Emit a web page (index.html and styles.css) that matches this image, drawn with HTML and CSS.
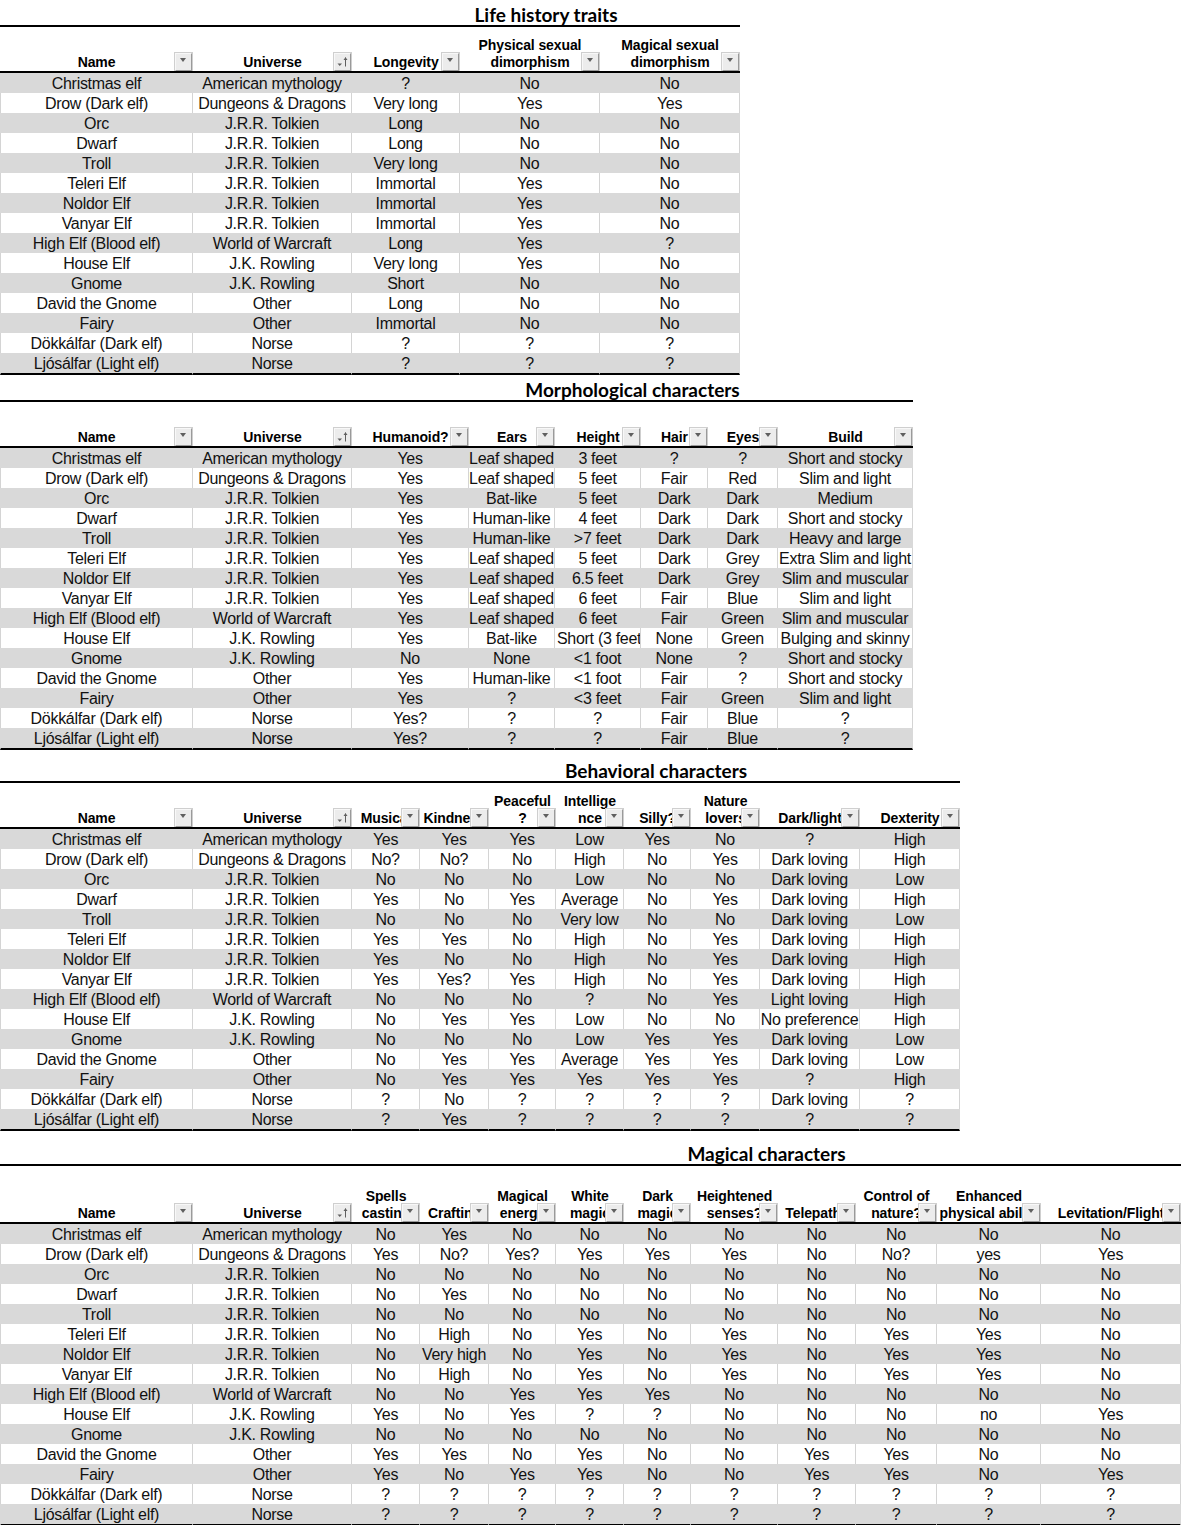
FILE: index.html
```html
<!DOCTYPE html>
<html>
<head>
<meta charset="utf-8">
<link rel="stylesheet" href="styles.css">
</head>
<body>

<section class="sheet s1">
  <div class="title-row"><div class="pad"></div><div class="title">Life history traits</div></div>
  <table class="t1">
    <colgroup><col style="width:193px"><col style="width:159px"><col style="width:108px"><col style="width:140px"><col style="width:140px"></colgroup>
    <thead><tr>
      <th>Name<span class="dd"></span></th>
      <th>Universe<span class="dd sort"><svg viewBox="0 0 15 16" width="15" height="16"><path d="M2.5 9.5h4.5l-2.25 2.5z" fill="#5f5f5f"/><path d="M10.5 3.5v9" stroke="#5f5f5f" stroke-width="1" fill="none"/><path d="M8.5 6l2-2.8 2 2.8z" fill="#5f5f5f"/></svg></span></th>
      <th>Longevity<span class="dd"></span></th>
      <th>Physical sexual<br>dimorphism<span class="dd"></span></th>
      <th>Magical sexual<br>dimorphism<span class="dd"></span></th>
    </tr></thead>
    <tbody>
      <tr class="g"><td>Christmas elf</td><td>American mythology</td><td>?</td><td>No</td><td>No</td></tr>
      <tr><td>Drow (Dark elf)</td><td>Dungeons &amp; Dragons</td><td>Very long</td><td>Yes</td><td>Yes</td></tr>
      <tr class="g"><td>Orc</td><td>J.R.R. Tolkien</td><td>Long</td><td>No</td><td>No</td></tr>
      <tr><td>Dwarf</td><td>J.R.R. Tolkien</td><td>Long</td><td>No</td><td>No</td></tr>
      <tr class="g"><td>Troll</td><td>J.R.R. Tolkien</td><td>Very long</td><td>No</td><td>No</td></tr>
      <tr><td>Teleri Elf</td><td>J.R.R. Tolkien</td><td>Immortal</td><td>Yes</td><td>No</td></tr>
      <tr class="g"><td>Noldor Elf</td><td>J.R.R. Tolkien</td><td>Immortal</td><td>Yes</td><td>No</td></tr>
      <tr><td>Vanyar Elf</td><td>J.R.R. Tolkien</td><td>Immortal</td><td>Yes</td><td>No</td></tr>
      <tr class="g"><td>High Elf (Blood elf)</td><td>World of Warcraft</td><td>Long</td><td>Yes</td><td>?</td></tr>
      <tr><td>House Elf</td><td>J.K. Rowling</td><td>Very long</td><td>Yes</td><td>No</td></tr>
      <tr class="g"><td>Gnome</td><td>J.K. Rowling</td><td>Short</td><td>No</td><td>No</td></tr>
      <tr><td>David the Gnome</td><td>Other</td><td>Long</td><td>No</td><td>No</td></tr>
      <tr class="g"><td>Fairy</td><td>Other</td><td>Immortal</td><td>No</td><td>No</td></tr>
      <tr><td>Dökkálfar (Dark elf)</td><td>Norse</td><td>?</td><td>?</td><td>?</td></tr>
      <tr class="g"><td>Ljósálfar (Light elf)</td><td>Norse</td><td>?</td><td>?</td><td>?</td></tr>
    </tbody>
  </table>
</section>

<section class="sheet s2">
  <div class="title-row"><div class="pad"></div><div class="title">Morphological characters</div></div>
  <table class="t2">
    <colgroup><col style="width:193px"><col style="width:159px"><col style="width:117px"><col style="width:86px"><col style="width:86px"><col style="width:67px"><col style="width:70px"><col style="width:135px"></colgroup>
    <thead><tr>
      <th>Name<span class="dd"></span></th>
      <th>Universe<span class="dd sort"><svg viewBox="0 0 15 16" width="15" height="16"><path d="M2.5 9.5h4.5l-2.25 2.5z" fill="#5f5f5f"/><path d="M10.5 3.5v9" stroke="#5f5f5f" stroke-width="1" fill="none"/><path d="M8.5 6l2-2.8 2 2.8z" fill="#5f5f5f"/></svg></span></th>
      <th>Humanoid?<span class="dd"></span></th>
      <th>Ears<span class="dd"></span></th>
      <th>Height<span class="dd"></span></th>
      <th>Hair<span class="dd"></span></th>
      <th>Eyes<span class="dd"></span></th>
      <th>Build<span class="dd"></span></th>
    </tr></thead>
    <tbody>
      <tr class="g"><td>Christmas elf</td><td>American mythology</td><td>Yes</td><td>Leaf shaped</td><td>3 feet</td><td>?</td><td>?</td><td>Short and stocky</td></tr>
      <tr><td>Drow (Dark elf)</td><td>Dungeons &amp; Dragons</td><td>Yes</td><td>Leaf shaped</td><td>5 feet</td><td>Fair</td><td>Red</td><td>Slim and light</td></tr>
      <tr class="g"><td>Orc</td><td>J.R.R. Tolkien</td><td>Yes</td><td>Bat-like</td><td>5 feet</td><td>Dark</td><td>Dark</td><td>Medium</td></tr>
      <tr><td>Dwarf</td><td>J.R.R. Tolkien</td><td>Yes</td><td>Human-like</td><td>4 feet</td><td>Dark</td><td>Dark</td><td>Short and stocky</td></tr>
      <tr class="g"><td>Troll</td><td>J.R.R. Tolkien</td><td>Yes</td><td>Human-like</td><td>&gt;7 feet</td><td>Dark</td><td>Dark</td><td>Heavy and large</td></tr>
      <tr><td>Teleri Elf</td><td>J.R.R. Tolkien</td><td>Yes</td><td>Leaf shaped</td><td>5 feet</td><td>Dark</td><td>Grey</td><td>Extra Slim and light</td></tr>
      <tr class="g"><td>Noldor Elf</td><td>J.R.R. Tolkien</td><td>Yes</td><td>Leaf shaped</td><td>6.5 feet</td><td>Dark</td><td>Grey</td><td>Slim and muscular</td></tr>
      <tr><td>Vanyar Elf</td><td>J.R.R. Tolkien</td><td>Yes</td><td>Leaf shaped</td><td>6 feet</td><td>Fair</td><td>Blue</td><td>Slim and light</td></tr>
      <tr class="g"><td>High Elf (Blood elf)</td><td>World of Warcraft</td><td>Yes</td><td>Leaf shaped</td><td>6 feet</td><td>Fair</td><td>Green</td><td>Slim and muscular</td></tr>
      <tr><td>House Elf</td><td>J.K. Rowling</td><td>Yes</td><td>Bat-like</td><td class="clip">Short (3 feet)</td><td>None</td><td>Green</td><td>Bulging and skinny</td></tr>
      <tr class="g"><td>Gnome</td><td>J.K. Rowling</td><td>No</td><td>None</td><td>&lt;1 foot</td><td>None</td><td>?</td><td>Short and stocky</td></tr>
      <tr><td>David the Gnome</td><td>Other</td><td>Yes</td><td>Human-like</td><td>&lt;1 foot</td><td>Fair</td><td>?</td><td>Short and stocky</td></tr>
      <tr class="g"><td>Fairy</td><td>Other</td><td>Yes</td><td>?</td><td>&lt;3 feet</td><td>Fair</td><td>Green</td><td>Slim and light</td></tr>
      <tr><td>Dökkálfar (Dark elf)</td><td>Norse</td><td>Yes?</td><td>?</td><td>?</td><td>Fair</td><td>Blue</td><td>?</td></tr>
      <tr class="g"><td>Ljósálfar (Light elf)</td><td>Norse</td><td>Yes?</td><td>?</td><td>?</td><td>Fair</td><td>Blue</td><td>?</td></tr>
    </tbody>
  </table>
</section>

<section class="sheet s3">
  <div class="title-row"><div class="pad"></div><div class="title">Behavioral characters</div></div>
  <table class="t3">
    <colgroup><col style="width:193px"><col style="width:159px"><col style="width:68px"><col style="width:69px"><col style="width:67px"><col style="width:68px"><col style="width:67px"><col style="width:69px"><col style="width:100px"><col style="width:100px"></colgroup>
    <thead><tr>
      <th>Name<span class="dd"></span></th>
      <th>Universe<span class="dd sort"><svg viewBox="0 0 15 16" width="15" height="16"><path d="M2.5 9.5h4.5l-2.25 2.5z" fill="#5f5f5f"/><path d="M10.5 3.5v9" stroke="#5f5f5f" stroke-width="1" fill="none"/><path d="M8.5 6l2-2.8 2 2.8z" fill="#5f5f5f"/></svg></span></th>
      <th>Musical<span class="dd"></span></th>
      <th>Kindness<span class="dd"></span></th>
      <th>Peaceful<br>?<span class="dd"></span></th>
      <th>Intellige<br>nce<span class="dd"></span></th>
      <th>Silly?<span class="dd"></span></th>
      <th>Nature<br>lovers<span class="dd"></span></th>
      <th>Dark/light<span class="dd"></span></th>
      <th>Dexterity<span class="dd"></span></th>
    </tr></thead>
    <tbody>
      <tr class="g"><td>Christmas elf</td><td>American mythology</td><td>Yes</td><td>Yes</td><td>Yes</td><td>Low</td><td>Yes</td><td>No</td><td>?</td><td>High</td></tr>
      <tr><td>Drow (Dark elf)</td><td>Dungeons &amp; Dragons</td><td>No?</td><td>No?</td><td>No</td><td>High</td><td>No</td><td>Yes</td><td>Dark loving</td><td>High</td></tr>
      <tr class="g"><td>Orc</td><td>J.R.R. Tolkien</td><td>No</td><td>No</td><td>No</td><td>Low</td><td>No</td><td>No</td><td>Dark loving</td><td>Low</td></tr>
      <tr><td>Dwarf</td><td>J.R.R. Tolkien</td><td>Yes</td><td>No</td><td>Yes</td><td>Average</td><td>No</td><td>Yes</td><td>Dark loving</td><td>High</td></tr>
      <tr class="g"><td>Troll</td><td>J.R.R. Tolkien</td><td>No</td><td>No</td><td>No</td><td>Very low</td><td>No</td><td>No</td><td>Dark loving</td><td>Low</td></tr>
      <tr><td>Teleri Elf</td><td>J.R.R. Tolkien</td><td>Yes</td><td>Yes</td><td>No</td><td>High</td><td>No</td><td>Yes</td><td>Dark loving</td><td>High</td></tr>
      <tr class="g"><td>Noldor Elf</td><td>J.R.R. Tolkien</td><td>Yes</td><td>No</td><td>No</td><td>High</td><td>No</td><td>Yes</td><td>Dark loving</td><td>High</td></tr>
      <tr><td>Vanyar Elf</td><td>J.R.R. Tolkien</td><td>Yes</td><td>Yes?</td><td>Yes</td><td>High</td><td>No</td><td>Yes</td><td>Dark loving</td><td>High</td></tr>
      <tr class="g"><td>High Elf (Blood elf)</td><td>World of Warcraft</td><td>No</td><td>No</td><td>No</td><td>?</td><td>No</td><td>Yes</td><td>Light loving</td><td>High</td></tr>
      <tr><td>House Elf</td><td>J.K. Rowling</td><td>No</td><td>Yes</td><td>Yes</td><td>Low</td><td>No</td><td>No</td><td>No preference</td><td>High</td></tr>
      <tr class="g"><td>Gnome</td><td>J.K. Rowling</td><td>No</td><td>No</td><td>No</td><td>Low</td><td>Yes</td><td>Yes</td><td>Dark loving</td><td>Low</td></tr>
      <tr><td>David the Gnome</td><td>Other</td><td>No</td><td>Yes</td><td>Yes</td><td>Average</td><td>Yes</td><td>Yes</td><td>Dark loving</td><td>Low</td></tr>
      <tr class="g"><td>Fairy</td><td>Other</td><td>No</td><td>Yes</td><td>Yes</td><td>Yes</td><td>Yes</td><td>Yes</td><td>?</td><td>High</td></tr>
      <tr><td>Dökkálfar (Dark elf)</td><td>Norse</td><td>?</td><td>No</td><td>?</td><td>?</td><td>?</td><td>?</td><td>Dark loving</td><td>?</td></tr>
      <tr class="g"><td>Ljósálfar (Light elf)</td><td>Norse</td><td>?</td><td>Yes</td><td>?</td><td>?</td><td>?</td><td>?</td><td>?</td><td>?</td></tr>
    </tbody>
  </table>
</section>

<section class="sheet s4">
  <div class="title-row"><div class="pad"></div><div class="title">Magical characters</div></div>
  <table class="t4">
    <colgroup><col style="width:193px"><col style="width:159px"><col style="width:68px"><col style="width:69px"><col style="width:67px"><col style="width:68px"><col style="width:67px"><col style="width:87px"><col style="width:78px"><col style="width:81px"><col style="width:104px"><col style="width:140px"></colgroup>
    <thead><tr>
      <th>Name<span class="dd"></span></th>
      <th>Universe<span class="dd sort"><svg viewBox="0 0 15 16" width="15" height="16"><path d="M2.5 9.5h4.5l-2.25 2.5z" fill="#5f5f5f"/><path d="M10.5 3.5v9" stroke="#5f5f5f" stroke-width="1" fill="none"/><path d="M8.5 6l2-2.8 2 2.8z" fill="#5f5f5f"/></svg></span></th>
      <th>Spells<br>casting<span class="dd"></span></th>
      <th>Crafting<span class="dd"></span></th>
      <th>Magical<br>energy<span class="dd"></span></th>
      <th>White<br>magic<span class="dd"></span></th>
      <th>Dark<br>magic<span class="dd"></span></th>
      <th>Heightened<br>senses?<span class="dd"></span></th>
      <th>Telepathy<span class="dd"></span></th>
      <th>Control of<br>nature?<span class="dd"></span></th>
      <th>Enhanced<br>physical ability<span class="dd"></span></th>
      <th>Levitation/Flight<span class="dd"></span></th>
    </tr></thead>
    <tbody>
      <tr class="g"><td>Christmas elf</td><td>American mythology</td><td>No</td><td>Yes</td><td>No</td><td>No</td><td>No</td><td>No</td><td>No</td><td>No</td><td>No</td><td>No</td></tr>
      <tr><td>Drow (Dark elf)</td><td>Dungeons &amp; Dragons</td><td>Yes</td><td>No?</td><td>Yes?</td><td>Yes</td><td>Yes</td><td>Yes</td><td>No</td><td>No?</td><td>yes</td><td>Yes</td></tr>
      <tr class="g"><td>Orc</td><td>J.R.R. Tolkien</td><td>No</td><td>No</td><td>No</td><td>No</td><td>No</td><td>No</td><td>No</td><td>No</td><td>No</td><td>No</td></tr>
      <tr><td>Dwarf</td><td>J.R.R. Tolkien</td><td>No</td><td>Yes</td><td>No</td><td>No</td><td>No</td><td>No</td><td>No</td><td>No</td><td>No</td><td>No</td></tr>
      <tr class="g"><td>Troll</td><td>J.R.R. Tolkien</td><td>No</td><td>No</td><td>No</td><td>No</td><td>No</td><td>No</td><td>No</td><td>No</td><td>No</td><td>No</td></tr>
      <tr><td>Teleri Elf</td><td>J.R.R. Tolkien</td><td>No</td><td>High</td><td>No</td><td>Yes</td><td>No</td><td>Yes</td><td>No</td><td>Yes</td><td>Yes</td><td>No</td></tr>
      <tr class="g"><td>Noldor Elf</td><td>J.R.R. Tolkien</td><td>No</td><td>Very high</td><td>No</td><td>Yes</td><td>No</td><td>Yes</td><td>No</td><td>Yes</td><td>Yes</td><td>No</td></tr>
      <tr><td>Vanyar Elf</td><td>J.R.R. Tolkien</td><td>No</td><td>High</td><td>No</td><td>Yes</td><td>No</td><td>Yes</td><td>No</td><td>Yes</td><td>Yes</td><td>No</td></tr>
      <tr class="g"><td>High Elf (Blood elf)</td><td>World of Warcraft</td><td>No</td><td>No</td><td>Yes</td><td>Yes</td><td>Yes</td><td>No</td><td>No</td><td>No</td><td>No</td><td>No</td></tr>
      <tr><td>House Elf</td><td>J.K. Rowling</td><td>Yes</td><td>No</td><td>Yes</td><td>?</td><td>?</td><td>No</td><td>No</td><td>No</td><td>no</td><td>Yes</td></tr>
      <tr class="g"><td>Gnome</td><td>J.K. Rowling</td><td>No</td><td>No</td><td>No</td><td>No</td><td>No</td><td>No</td><td>No</td><td>No</td><td>No</td><td>No</td></tr>
      <tr><td>David the Gnome</td><td>Other</td><td>Yes</td><td>Yes</td><td>No</td><td>Yes</td><td>No</td><td>No</td><td>Yes</td><td>Yes</td><td>No</td><td>No</td></tr>
      <tr class="g"><td>Fairy</td><td>Other</td><td>Yes</td><td>No</td><td>Yes</td><td>Yes</td><td>No</td><td>No</td><td>Yes</td><td>Yes</td><td>No</td><td>Yes</td></tr>
      <tr><td>Dökkálfar (Dark elf)</td><td>Norse</td><td>?</td><td>?</td><td>?</td><td>?</td><td>?</td><td>?</td><td>?</td><td>?</td><td>?</td><td>?</td></tr>
      <tr class="g"><td>Ljósálfar (Light elf)</td><td>Norse</td><td>?</td><td>?</td><td>?</td><td>?</td><td>?</td><td>?</td><td>?</td><td>?</td><td>?</td><td>?</td></tr>
    </tbody>
  </table>
</section>

</body>
</html>
```

FILE: styles.css
```css
html, body {
  margin: 0;
  padding: 0;
  background: #ffffff;
}

body {
  font-family: "Liberation Sans", Arial, sans-serif;
  color: #111111;
}

.sheet {
  display: flex;
  flex-direction: column;
  align-items: flex-start;
}

.s3 { margin-top: 6px; }
.s4 { margin-top: 8px; }

.title-row {
  display: flex;
  height: 25px;
  border-bottom: 2px solid #000;
}

.s1 .title-row { width: 740px; }
.s2 .title-row { width: 913px; }
.s3 .title-row { width: 960px; }
.s4 .title-row { width: 1181px; }

.title-row .pad {
  flex: 0 0 352px;
}

.title {
  flex: 1;
  text-align: center;
  font-family: Lato, "Open Sans", sans-serif;
  font-weight: 700;
  font-size: 19px;
  line-height: 29px;
  color: #000;
  white-space: nowrap;
}

table {
  border-collapse: separate;
  border-spacing: 0;
  table-layout: fixed;
}

.t1 { width: 740px; }
.t2 { width: 913px; }
.t3 { width: 960px; }
.t4 { width: 1181px; }

th {
  position: relative;
  height: 44px;
  padding: 0;
  vertical-align: bottom;
  text-align: center;
  font-weight: 700;
  font-size: 14px;
  line-height: 17px;
  letter-spacing: -0.1px;
  color: #000;
  white-space: nowrap;
  overflow: hidden;
  border-bottom: 2px solid #000;
}

.t4 th { height: 56px; }

td {
  height: 19px;
  padding: 1px 0 0;
  text-align: center;
  font-size: 16px;
  line-height: 19px;
  letter-spacing: -0.3px;
  white-space: nowrap;
  overflow: hidden;
  border-right: 1px solid #d4d4d4;
}

td:first-child {
  border-left: 1px solid #d4d4d4;
}

tr.g td {
  background: #d9d9d9;
  border-color: #d9d9d9;
}

tbody tr:last-child td {
  border-bottom: 2px solid #000;
}

td.clip {
  text-align: left;
  padding-left: 2px;
}

/* filter drop-down buttons */
.dd {
  position: absolute;
  right: 1px;
  bottom: 0;
  width: 15px;
  height: 16px;
  background: #ececec;
  border: 1px solid;
  border-color: #f8f8f8 #9a9a9a #9a9a9a #f8f8f8;
  box-shadow: 0 0 0 1px #cfcfcf;
}

.dd::after {
  content: "";
  position: absolute;
  left: 4px;
  top: 4px;
  border-left: 3.5px solid transparent;
  border-right: 3.5px solid transparent;
  border-top: 4px solid #5f5f5f;
}

.dd.sort::after {
  display: none;
}

.dd svg {
  display: block;
}
```
